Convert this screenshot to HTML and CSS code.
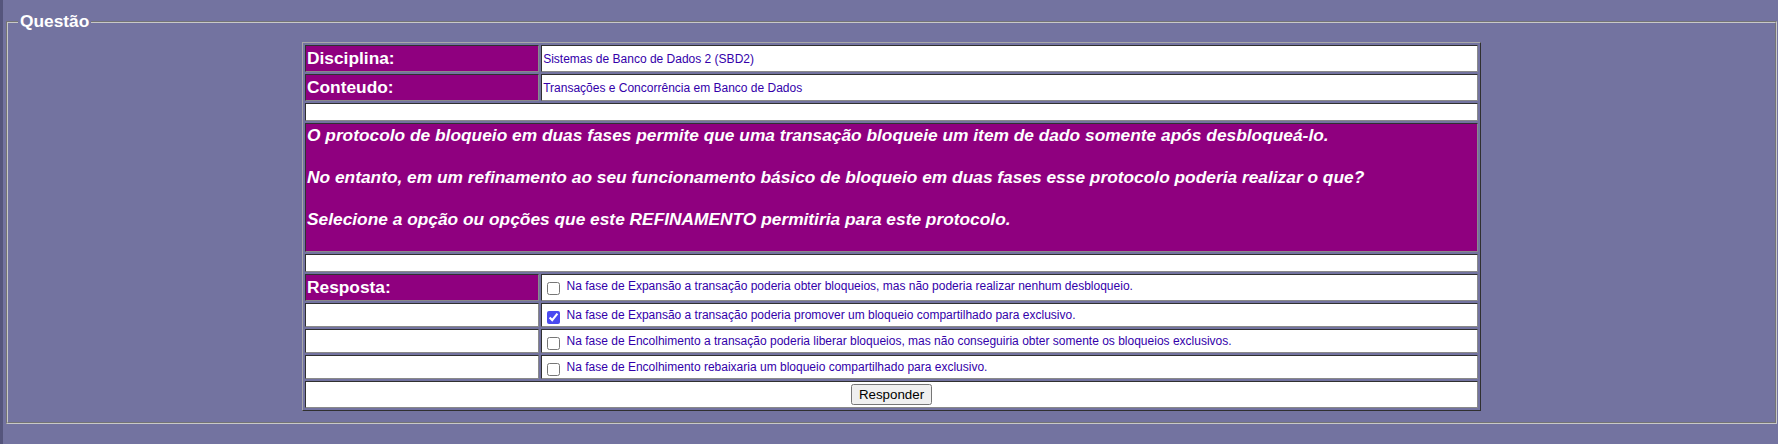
FILE: index.html
```html
<!DOCTYPE html>
<html>
<head>
<meta charset="utf-8">
<title>Questão</title>
<link rel="stylesheet" href="styles.css">
</head>
<body>
<fieldset class="box">
  <legend class="box-title">Questão</legend>
  <table class="quiz">
    <tr>
      <td class="label">Disciplina:</td>
      <td class="value">Sistemas de Banco de Dados 2 (SBD2)</td>
    </tr>
    <tr>
      <td class="label">Conteudo:</td>
      <td class="value">Transações e Concorrência em Banco de Dados</td>
    </tr>
    <tr><td class="blank" colspan="2">&nbsp;</td></tr>
    <tr>
      <td class="question" colspan="2">O protocolo de bloqueio em duas fases permite que uma transação bloqueie um item de dado somente após desbloqueá-lo.<br><br>No entanto, em um refinamento ao seu funcionamento básico de bloqueio em duas fases esse protocolo poderia realizar o que?<br><br>Selecione a opção ou opções que este REFINAMENTO permitiria para este protocolo.<br><br></td>
    </tr>
    <tr><td class="blank" colspan="2">&nbsp;</td></tr>
    <tr>
      <td class="label">Resposta:</td>
      <td class="answer"><label class="opt"><input type="checkbox" class="chk"> Na fase de Expansão a transação poderia obter bloqueios, mas não poderia realizar nenhum desbloqueio.</label></td>
    </tr>
    <tr>
      <td class="empty"></td>
      <td class="answer"><label class="opt"><input type="checkbox" class="chk" checked> Na fase de Expansão a transação poderia promover um bloqueio compartilhado para exclusivo.</label></td>
    </tr>
    <tr>
      <td class="empty"></td>
      <td class="answer"><label class="opt"><input type="checkbox" class="chk"> Na fase de Encolhimento a transação poderia liberar bloqueios, mas não conseguiria obter somente os bloqueios exclusivos.</label></td>
    </tr>
    <tr>
      <td class="empty"></td>
      <td class="answer"><label class="opt"><input type="checkbox" class="chk"> Na fase de Encolhimento rebaixaria um bloqueio compartilhado para exclusivo.</label></td>
    </tr>
    <tr>
      <td class="submit" colspan="2"><button type="button" class="btn">Responder</button></td>
    </tr>
  </table>
</fieldset>
</body>
</html>
```

FILE: styles.css
```css
html {
  background: #7373a0;
}
body {
  margin: 0;
  border-left: 3px solid #55557c;
  min-height: 444px;
  box-sizing: border-box;
  padding: 11px 1px 0 3px;
  font-family: "Liberation Sans", Arial, sans-serif;
}
.box {
  margin: 0;
  padding: 10px 0 11px;
  border: 2px groove #c8c8c8;
  min-width: 0;
}
.box-title {
  color: #ffffff;
  font-weight: bold;
  font-size: 13pt;
  padding: 0 2px;
  margin-left: 10px;
}
.quiz {
  width: 1179px;
  margin: 0 auto;
  border-collapse: separate;
  border-spacing: 2px;
  border: 1px solid;
  border-color: #a8a8a8 #303030 #303030 #a8a8a8;
}
.quiz td {
  border: 1px solid;
  border-color: #303030 #8a8a8a #8a8a8a #303030;
  padding: 1px;
  background: #ffffff;
}
.quiz td.label {
  width: 20%;
  background: #8f007f;
  color: #ffffff;
  font-weight: bold;
  font-size: 13pt;
  height: 23px;
}
.quiz td.value {
  color: #3300aa;
  font-size: 12px;
  vertical-align: middle;
}
.quiz td.answer {
  color: #3300aa;
  font-size: 12px;
  vertical-align: top;
  padding-top: 4px;
}
.quiz td.blank {
  font-size: 12px;
}
.quiz td.question {
  background: #8f007f;
  color: #ffffff;
  font-weight: bold;
  font-style: italic;
  font-size: 13pt;
  line-height: 20.9px;
}
.quiz td.empty {
  height: 20px;
}
.opt {
  display: inline;
}
.chk {
  margin: 3px 3px 0 4px;
  vertical-align: top;
  width: 13px;
  height: 13px;
  accent-color: #4a4af0;
}
.quiz td.submit {
  text-align: center;
  height: 23px;
}
.btn {
  font-family: "Liberation Sans", Arial, sans-serif;
  font-size: 13.33px;
  padding: 1px 6px;
}
```
